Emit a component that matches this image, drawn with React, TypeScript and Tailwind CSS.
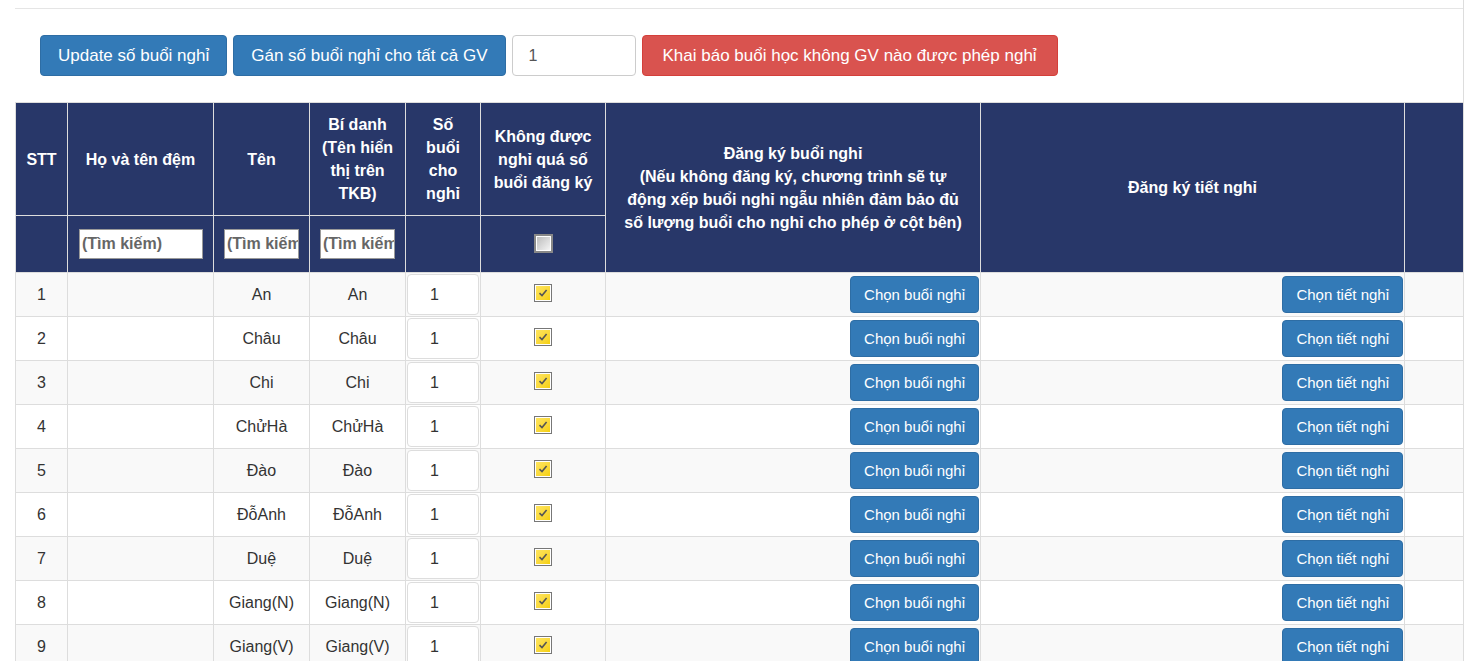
import React from "react";

const teachers = [
  "An",
  "Châu",
  "Chi",
  "ChửHà",
  "Đào",
  "ĐỗAnh",
  "Duệ",
  "Giang(N)",
  "Giang(V)",
  "Hà",
];

function YellowCheck() {
  return (
    <span className="inline-flex h-[18px] w-[18px] items-center justify-center border border-[#777] bg-white p-[1px]">
      <span className="flex h-full w-full items-center justify-center bg-gradient-to-br from-[#ffe55c] to-[#f5d000]">
        <svg viewBox="0 0 10 10" className="h-[10px] w-[10px]">
          <path d="M1.5 5.2 L4 7.6 L8.6 2" fill="none" stroke="#555" strokeWidth="1.6" />
        </svg>
      </span>
    </span>
  );
}

function GrayCheck() {
  return (
    <span className="inline-flex h-[19px] w-[19px] items-center justify-center border-2 border-[#888] bg-white p-[1px]">
      <span className="h-full w-full bg-gradient-to-br from-[#bdbdbd] to-[#f4f4f4]" />
    </span>
  );
}

function SearchBox({ width }: { width: string }) {
  return (
    <div
      className={`${width} h-[30px] overflow-hidden whitespace-nowrap border border-[#999] bg-white pl-[2px] text-left text-[16px] font-bold leading-[28px] text-[#666]`}
    >
      (Tìm kiếm)
    </div>
  );
}

export default function App() {
  const th = "border border-[#ddd] align-middle text-center font-bold text-white";
  const td = "border border-[#ddd] px-2 text-center align-middle";
  const topBtn = "h-[41px] rounded-[4px] border px-[17px] text-[17px] text-white";

  return (
    <div
      className="min-h-[661px] w-[1464px] border-r border-[#ddd] bg-white pl-[15px] text-[#333]"
      style={{ fontFamily: '"Liberation Sans", Arial, sans-serif' }}
    >
      <div className="h-[9px] border-b border-[#e5e5e5]" />

      <div className="flex items-center gap-[6px] pl-[25px] pt-[26px] pb-[26px]">
        <button className={`${topBtn} border-[#2e6da4] bg-[#337ab7]`}>Update số buổi nghỉ</button>
        <button className={`${topBtn} border-[#2e6da4] bg-[#337ab7]`}>Gán số buổi nghỉ cho tất cả GV</button>
        <div className="flex h-[41px] w-[124px] items-center rounded-[4px] border border-[#ccc] bg-white pl-[16px] text-[16px] text-[#555]">
          1
        </div>
        <button className={`${topBtn} border-[#d43f3a] bg-[#d9534f] px-[20px]`}>
          Khai báo buổi học không GV nào được phép nghỉ
        </button>
      </div>

      <table className="w-[1448px] table-fixed border-collapse text-[16px] leading-[23px]">
        <colgroup>
          <col className="w-[52px]" />
          <col className="w-[146px]" />
          <col className="w-[96px]" />
          <col className="w-[96px]" />
          <col className="w-[75px]" />
          <col className="w-[125px]" />
          <col className="w-[375px]" />
          <col className="w-[424px]" />
          <col className="w-[59px]" />
        </colgroup>
        <thead className="bg-[#283769]">
          <tr className="h-[113px]">
            <th className={th}>STT</th>
            <th className={th}>Họ và tên đệm</th>
            <th className={th}>Tên</th>
            <th className={`${th} px-2`}>
              Bí danh
              <br />
              (Tên hiển thị trên TKB)
            </th>
            <th className={`${th} px-2`}>Số buổi cho nghỉ</th>
            <th className={`${th} px-2`}>Không được nghỉ quá số buổi đăng ký</th>
            <th rowSpan={2} className={`${th} px-3`}>
              Đăng ký buổi nghỉ
              <br />
              (Nếu không đăng ký, chương trình sẽ tự động xếp buổi nghỉ ngẫu nhiên đảm bảo đủ số lượng buổi cho nghỉ
              cho phép ở cột bên)
            </th>
            <th rowSpan={2} className={th}>
              Đăng ký tiết nghỉ
            </th>
            <th rowSpan={2} className={th} />
          </tr>
          <tr className="h-[57px]">
            <th className={th} />
            <th className={`${th} pl-[11px]`}>
              <SearchBox width="w-[124px]" />
            </th>
            <th className={`${th} pl-[10px]`}>
              <SearchBox width="w-[75px]" />
            </th>
            <th className={`${th} pl-[10px]`}>
              <SearchBox width="w-[75px]" />
            </th>
            <th className={th} />
            <th className={th}>
              <GrayCheck />
            </th>
          </tr>
        </thead>
        <tbody>
          {teachers.map((name, i) => (
            <tr key={i} className={`h-[44px] ${i % 2 === 0 ? "bg-[#f9f9f9]" : "bg-white"}`}>
              <td className={td}>{i + 1}</td>
              <td className={td} />
              <td className={td}>{name}</td>
              <td className={td}>{name}</td>
              <td className="border border-[#ddd] px-[1px] py-[1px] align-middle">
                <div className="flex h-[41px] items-center rounded-[4px] border border-[#ddd] bg-white pl-[22px] text-[#333]">
                  1
                </div>
              </td>
              <td className={`${td} pb-[4px]`}>
                <YellowCheck />
              </td>
              <td className="border border-[#ddd] pr-[1px] text-right align-middle">
                <button className="h-[37px] rounded-[4px] border border-[#2e6da4] bg-[#337ab7] px-[13px] text-[15px] text-white">
                  Chọn buổi nghỉ
                </button>
              </td>
              <td className="border border-[#ddd] pr-[1px] text-right align-middle">
                <button className="h-[37px] rounded-[4px] border border-[#2e6da4] bg-[#337ab7] px-[13px] text-[15px] text-white">
                  Chọn tiết nghỉ
                </button>
              </td>
              <td className={td} />
            </tr>
          ))}
        </tbody>
      </table>
    </div>
  );
}
